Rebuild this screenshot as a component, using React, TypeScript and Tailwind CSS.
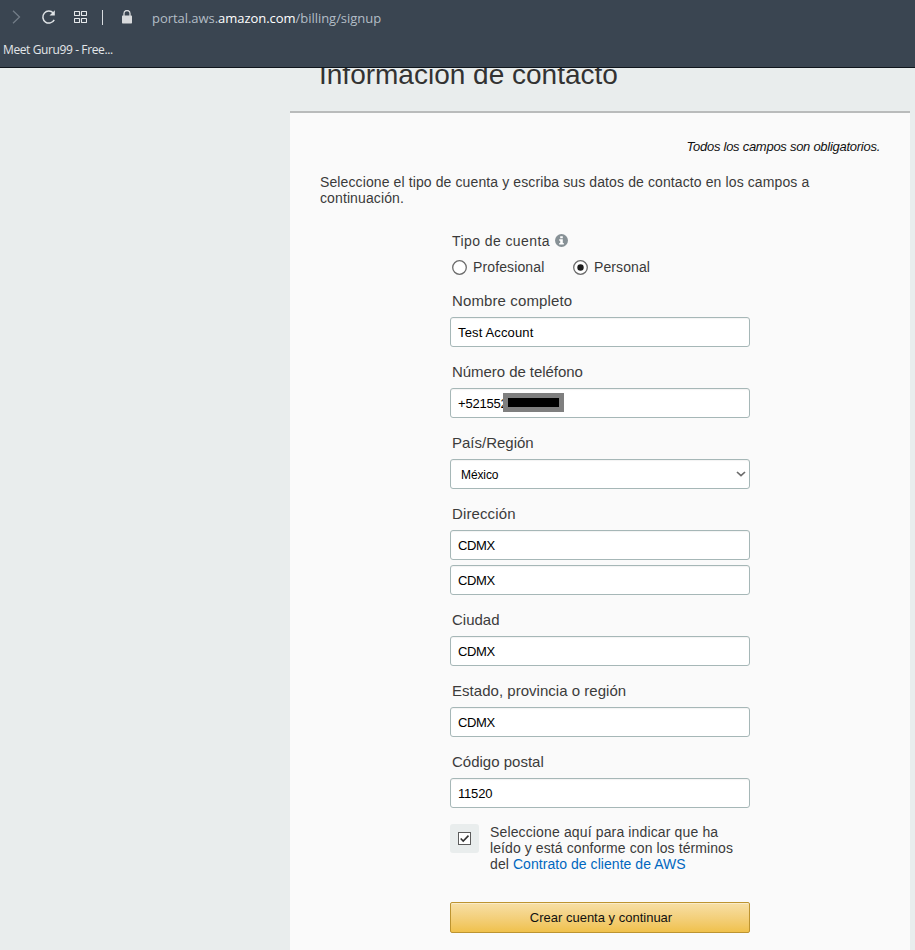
import React from "react";

function Label({ text, tracking = "" }: { text: string; tracking?: string }) {
  return (
    <label className={`mt-[15px] mb-[6px] block h-5 pl-[2px] text-[15px] leading-5 whitespace-nowrap text-[#3c3c3c] ${tracking}`}>
      {text}
    </label>
  );
}

function Box({ children }: { children: React.ReactNode }) {
  return (
    <div className="flex h-[30px] w-[300px] items-center rounded-[3px] border border-[#a6b7b7] bg-white px-[7px] pt-px text-[13px] text-black shadow-[inset_0_1px_1px_rgba(0,0,0,0.05)]">
      {children}
    </div>
  );
}

function BrowserBar() {
  return (
    <header className="h-[68px] w-full border-b border-[#10161c] bg-[#3a4551] font-['Open_Sans','Noto_Sans',sans-serif]">
      <div className="flex h-[34px] items-center">
        <svg className="ml-[12px] h-[14px] w-[9px]" viewBox="0 0 9 14" fill="none" stroke="#727c87" strokeWidth="1.3">
          <path d="M1 .8l6.500 6.200L1 13.200" />
        </svg>
        <svg className="ml-[20px] h-4 w-4" viewBox="0 0 16 16" fill="none" stroke="#dfe3e6" strokeWidth="1.500">
          <path d="M12.300 4A6 6 0 1 0 13.200 10.800" />
          <path d="M13.800 1.200v5.300H8.500z" fill="#dfe3e6" stroke="none" />
        </svg>
        <svg className="ml-[17px] h-3 w-[13px]" viewBox="0 0 13 12" fill="none" stroke="#e6e9eb" strokeWidth="1.1">
          <rect x=".5" y=".5" width="5" height="4" rx=".3" />
          <rect x="7.500" y=".5" width="5" height="4" rx=".3" />
          <rect x=".5" y="7.500" width="5" height="4" rx=".3" />
          <rect x="7.500" y="7.500" width="5" height="4" rx=".3" />
        </svg>
        <div className="ml-[15px] h-[15px] w-px bg-[#d8dcdf]" />
        <svg className="ml-[19px] h-[14px] w-[10px]" viewBox="0 0 10 14">
          <path d="M2 6V3.500a3 3 0 0 1 6 0V6" fill="none" stroke="#d8dadc" strokeWidth="1.300" />
          <rect y="5.500" width="10" height="8" rx=".7" fill="#d8dadc" />
        </svg>
        <div className="ml-[20px] pt-[2px] text-[13px] leading-5 tracking-[-0.04px] whitespace-nowrap text-[#b3bdc6]">
          portal.aws.<span className="text-white">amazon.com</span>/billing/signup
        </div>
      </div>
      <div className="pt-[6px] pl-[3px] text-[12px] leading-5 tracking-[-0.39px] text-[#e3e6e9]">Meet Guru99 - Free...</div>
    </header>
  );
}

export default function App() {
  return (
    <div className="flex h-[950px] w-[915px] flex-col overflow-hidden bg-[#e9eded] font-['Liberation_Sans',Arial,sans-serif]">
      <BrowserBar />
      <div className="h-[43px] overflow-hidden pl-[319px]">
        <h1 className="-mt-[9px] text-[28px] leading-8 font-normal whitespace-nowrap text-[#333]">Información de contacto</h1>
      </div>
      <main className="ml-[290px] h-[839px] w-[620px] border-t-2 border-[#b9bbbb] bg-[#fafafa]">
        <p className="pt-[25px] pr-[30px] text-right text-[13px] leading-[18px] tracking-[-0.27px] text-[#111] italic">
          Todos los campos son obligatorios.
        </p>
        <p className="mt-[18px] ml-[30px] w-[500px] text-[14px] leading-4 tracking-[0.11px] whitespace-nowrap text-[#3a3a3a]">
          Seleccione el tipo de cuenta y escriba sus datos de contacto en los campos a
          <br />
          continuación.
        </p>
        <form className="mt-[25px] ml-[160px] w-[300px]">
          <div className="flex h-5 items-center pl-[2px] text-[14px] leading-5 tracking-[0.42px] text-[#3a3a3a]">
            Tipo de cuenta
            <svg className="-mt-px ml-[5px] h-[13px] w-[13px]" viewBox="0 0 13 13">
              <circle cx="6.500" cy="6.500" r="6.500" fill="#879196" />
              <path d="M5.200 2.200h2.600v2H5.200zM4.200 5.200h3.600v3.900h1v1.500H4.200V9.100h1V6.700h-1z" fill="#fff" />
            </svg>
          </div>
          <div className="mt-[6px] -mb-px flex h-5 items-center pl-[2px] text-[14px] leading-5 text-[#3a3a3a]">
            <svg className="h-[15px] w-[15px]" viewBox="0 0 15 15">
              <circle cx="7.500" cy="7.500" r="6.800" fill="#fff" stroke="#6b6b6b" strokeWidth="1.300" />
            </svg>
            <span className="ml-[6px] w-[100px] tracking-[0.12px]">Profesional</span>
            <svg className="h-[15px] w-[15px]" viewBox="0 0 15 15">
              <circle cx="7.500" cy="7.500" r="6.800" fill="#fff" stroke="#6b6b6b" strokeWidth="1.300" />
              <circle cx="7.500" cy="7.500" r="3.200" fill="#1c1c1c" />
            </svg>
            <span className="ml-[6px] tracking-[0.1px]">Personal</span>
          </div>
          <Label text="Nombre completo" tracking="tracking-[0.12px]" />
          <Box><span className="tracking-[0.15px]">Test Account</span></Box>
          <Label text="Número de teléfono" tracking="tracking-[-0.05px]" />
          <div className="relative">
            <Box><span className="tracking-[-0.2px]">+521552</span></Box>
            <div className="absolute top-[5px] left-[53px] h-[19px] w-[61px] border-5 border-[#7f7f7f] bg-black" />
          </div>
          <Label text="País/Región" />
          <Box>
            <span className="ml-[3px] flex-1 text-[12px] tracking-[-0.1px]">México</span>
            <svg className="-mr-[4px] -mt-px h-[6px] w-[10px]" viewBox="0 0 10 6" fill="none" stroke="#6c6c6c" strokeWidth="1.700">
              <path d="M1 1l4 3.700L9 1" />
            </svg>
          </Box>
          <Label text="Dirección" tracking="tracking-[0.12px]" />
          <Box><span className="tracking-[-0.4px]">CDMX</span></Box>
          <div className="h-[5px]" />
          <Box><span className="tracking-[-0.4px]">CDMX</span></Box>
          <Label text="Ciudad" />
          <Box><span className="tracking-[-0.4px]">CDMX</span></Box>
          <Label text="Estado, provincia o región" tracking="tracking-[0.03px]" />
          <Box><span className="tracking-[-0.4px]">CDMX</span></Box>
          <Label text="Código postal" />
          <Box><span className="tracking-[-0.2px]">11520</span></Box>
          <div className="mt-4 flex">
            <span className="flex h-[29px] w-[29px] items-center justify-center rounded-[3px] bg-[#e9eded]">
              <svg className="h-[13px] w-[13px]" viewBox="0 0 13 13" fill="none">
                <rect x=".5" y=".5" width="12" height="12" fill="#fff" stroke="#5c5c5c" />
                <path d="M2.700 6.500l2.500 2.500L10.500 3.600" stroke="#333" strokeWidth="1.600" />
              </svg>
            </span>
            <p className="ml-[11px] text-[14px] leading-4 tracking-[0.09px] whitespace-nowrap text-[#3a3a3a]">
              <span className="tracking-[0.14px]">Seleccione aquí para indicar que ha</span>
              <br />
              leído y está conforme con los términos
              <br />
              del <span className="tracking-[0.05px] text-[#0067bf]">Contrato de cliente de AWS</span>
            </p>
          </div>
          <button
            type="button"
            className="mt-[30px] block h-[31px] w-[300px] rounded-[2px] border border-[#bd9430] bg-linear-to-b from-[#f7dfa5] to-[#f0c14b] pl-[2px] text-[13px] text-[#111] shadow-[inset_0_1px_0_rgba(255,255,255,0.4)]"
          >
            Crear cuenta y continuar
          </button>
        </form>
      </main>
    </div>
  );
}
